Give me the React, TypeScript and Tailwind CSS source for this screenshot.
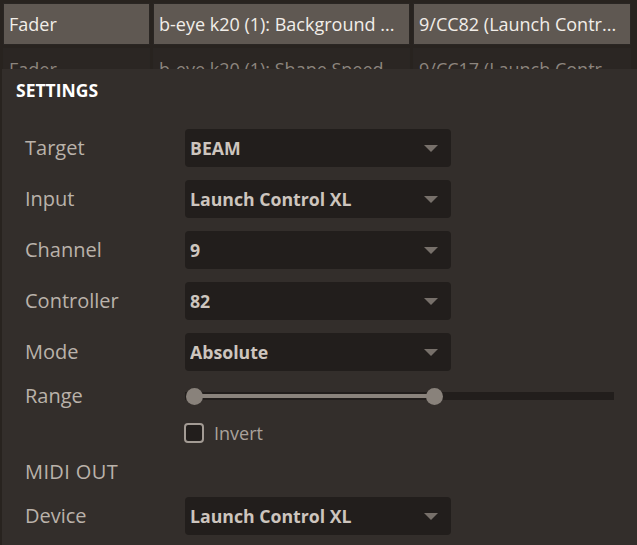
const rows = [
  { type: 'Fader', target: 'b-eye k20 (1): Background ...', midi: '9/CC82 (Launch Contr...', selected: true },
  { type: 'Fader', target: 'b-eye k20 (1): Shape Speed', midi: '9/CC17 (Launch Contr...', selected: false },
]

const fields = [
  { label: 'Target', value: 'BEAM' },
  { label: 'Input', value: 'Launch Control XL' },
  { label: 'Channel', value: '9' },
  { label: 'Controller', value: '82' },
  { label: 'Mode', value: 'Absolute' },
]

function Select({ value }: { value: string }) {
  return (
    <div className="w-[266px] h-[38px] rounded-[4px] bg-[#221e1c] flex items-center justify-between pl-[5px] pr-[13px]">
      <span className="text-[17.7px] font-bold text-[#cdc5be] truncate">{value}</span>
      <span className="w-0 h-0 border-l-[7px] border-r-[7px] border-t-[7px] border-l-transparent border-r-transparent border-t-[#77706a]" />
    </div>
  )
}

function Field({ label, children }: { label: string; children: React.ReactNode }) {
  return (
    <div className="flex items-center h-[38px]">
      <span className="w-[160px] text-[20px] text-[#bab2aa]">{label}</span>
      {children}
    </div>
  )
}

export default function App() {
  return (
    <div className="relative w-[637px] h-[545px] overflow-hidden bg-[#28231f] font-['Open_Sans',sans-serif]">
      <div className="pt-[3px] flex flex-col gap-[3px]">
        {rows.map((r, i) => (
          <div key={i} className="flex gap-[3px] pl-[3px] h-[42px]">
            {[
              { t: r.type, w: 'w-[147px]' },
              { t: r.target, w: 'w-[257px]' },
              { t: r.midi, w: 'w-[218px]' },
            ].map((c, j) => (
              <div
                key={j}
                className={`${c.w} shrink-0 flex items-center pt-[1px] px-[5px] text-[18px] whitespace-nowrap overflow-hidden border border-[#2a2623] ${
                  r.selected ? 'bg-[#5f5852] text-[#f2eee9]' : 'bg-[#2b2623] text-[#8d857e]'
                }`}
              >
                {c.t}
              </div>
            ))}
          </div>
        ))}
      </div>

      <div className="absolute top-[69px] left-[2px] right-0 bottom-0 bg-[#332e2b]">
        <h2 className="pl-[14px] pt-[10px] text-[17.5px] leading-[22px] font-bold text-white">SETTINGS</h2>

        <div className="pl-[23px] pt-[28px] flex flex-col">
          <div className="flex flex-col gap-[13px]">
            {fields.map(f => (
              <Field key={f.label} label={f.label}>
                <Select value={f.value} />
              </Field>
            ))}
          </div>

          <div className="flex items-center h-[20px] mt-[15px]">
            <span className="w-[160px] text-[20px] text-[#bab2aa]">Range</span>
            <div className="relative w-[429px] h-[17px] flex items-center">
              <div className="w-full h-[8px] bg-[#221e1c]" />
              <div className="absolute left-[9px] w-[240px] h-[4px] top-[6.5px] bg-[#8a837c]" />
              <div className="absolute left-[1px] top-0 w-[17px] h-[17px] rounded-full bg-[#89827b]" />
              <div className="absolute left-[241px] top-0 w-[17px] h-[17px] rounded-full bg-[#89827b]" />
            </div>
          </div>

          <div className="flex items-center h-[22px] mt-[16px] pl-[159px] gap-[10px]">
            <span className="w-[20px] h-[20px] rounded-[4px] border-2 border-[#a39b94] bg-[#221e1c]" />
            <span className="text-[18px] text-[#aaa29b]">Invert</span>
          </div>

          <div className="h-[27px] mt-[14px] flex items-center text-[20px] tracking-[0.4px] text-[#bab2aa]">MIDI OUT</div>

          <div className="mt-[12px]">
            <Field label="Device">
              <Select value="Launch Control XL" />
            </Field>
          </div>
        </div>
      </div>
    </div>
  )
}
